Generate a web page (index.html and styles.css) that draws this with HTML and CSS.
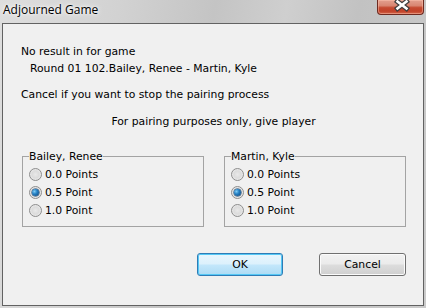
FILE: index.html
```html
<!DOCTYPE html>
<html>
<head>
<meta charset="utf-8">
<link rel="stylesheet" href="styles.css">
</head>
<body>
<div class="window">
  <div class="titlebar">
    <span class="title">Adjourned Game</span>
    <div class="close">
      <svg width="45" height="14" viewBox="0 0 45 14">
        <path d="M19.5 1.5 L28.5 8.5 M28.5 1.5 L19.5 8.5" stroke="#3d3d3d" stroke-width="5" stroke-linecap="square" fill="none"/>
        <path d="M19.5 1.5 L28.5 8.5 M28.5 1.5 L19.5 8.5" stroke="#ffffff" stroke-width="2.6" stroke-linecap="square" fill="none"/>
      </svg>
    </div>
  </div>
  <div class="client">
    <p class="line">No result in for game</p>
    <p class="line indent">Round 01 102.Bailey, Renee - Martin, Kyle</p>
    <p class="line gap-a">Cancel if you want to stop the pairing process</p>
    <p class="line gap-b center">For pairing purposes only, give player</p>
    <div class="groups">
      <fieldset class="group">
        <legend>Bailey, Renee</legend>
        <label class="option"><span class="radio"></span>0.0 Points</label>
        <label class="option"><span class="radio checked"></span>0.5 Point</label>
        <label class="option"><span class="radio"></span>1.0 Point</label>
      </fieldset>
      <fieldset class="group">
        <legend>Martin, Kyle</legend>
        <label class="option"><span class="radio"></span>0.0 Points</label>
        <label class="option"><span class="radio checked"></span>0.5 Point</label>
        <label class="option"><span class="radio"></span>1.0 Point</label>
      </fieldset>
    </div>
    <div class="buttons">
      <button class="btn btn-ok">OK</button>
      <button class="btn btn-cancel">Cancel</button>
    </div>
  </div>
</div>
</body>
</html>
```
FILE: styles.css
```css
* { box-sizing: border-box; }
html, body { margin: 0; padding: 0; }
body {
  width: 426px;
  height: 308px;
  overflow: hidden;
  background: #cfcfcf;
  font-family: "DejaVu Sans", Verdana, sans-serif;
  font-size: 10.8px;
  color: #000;
}
.window {
  width: 426px;
  height: 308px;
  display: flex;
  flex-direction: column;
  background: linear-gradient(100deg, #dedede 0%, #d2d2d2 25%, #c4c4c4 45%, #cfcfcf 60%, #c2c2c2 75%, #cbcbcb 100%);
}
.titlebar {
  height: 23px;
  flex: none;
  display: flex;
  justify-content: space-between;
  align-items: flex-start;
  padding: 0 2px 0 3px;
}
.title {
  font-family: "Open Sans", "Noto Sans", sans-serif;
  font-size: 12px;
  line-height: 16px;
  padding-top: 2px;
  color: #000;
  text-shadow: 0 0 6px #fff, 0 0 3px #fff;
}
.close {
  width: 47px;
  height: 15px;
  border: 1px solid #6e2a20;
  border-top: none;
  border-radius: 0 0 4px 4px;
  background: linear-gradient(#e3a08f 0%, #d98672 40%, #c54a31 55%, #c24229 80%, #d3684d 100%);
  box-shadow: inset 0 0 0 1px rgba(255, 200, 180, 0.45);
  display: flex;
}
.close svg { display: block; }
.client {
  flex: 1;
  margin: 0 2px 2px 2px;
  border: 1px solid #626262;
  background: #f0f0f0;
  padding: 19px 17px 0 18px;
  display: flex;
  flex-direction: column;
}
.line {
  margin: 0;
  height: 17px;
  line-height: 17px;
  white-space: nowrap;
}
.indent { padding-left: 9px; }
.gap-a { margin-top: 9px; }
.gap-b { margin-top: 10px; }
.center { text-align: center; }
.groups {
  margin-top: 20px;
  margin-left: 1px;
  display: flex;
  gap: 20px;
}
.group {
  width: 182px;
  margin: 0;
  border: 1px solid #a3a3a3;
  padding: 2px 6px 7px 6px;
  display: flex;
  flex-direction: column;
}
.group legend {
  padding: 0;
  line-height: 13px;
}
.option {
  height: 18px;
  display: flex;
  align-items: center;
  white-space: nowrap;
}
.radio {
  width: 13px;
  height: 13px;
  border-radius: 50%;
  border: 1px solid #8d8d8d;
  background: radial-gradient(circle at 50% 50%, #e9e9e9 0%, #dcdcdc 45%, #f6f6f6 100%);
  margin-right: 3px;
  flex: none;
  display: flex;
  align-items: center;
  justify-content: center;
}
.radio.checked::after {
  content: "";
  width: 7px;
  height: 7px;
  border-radius: 50%;
  background: radial-gradient(circle at 35% 35%, #7fcdf5 0%, #2580c4 40%, #0c3f72 100%);
  box-shadow: 0 0 0 0.5px #173f66;
}
.buttons {
  margin-top: 26px;
  display: flex;
  justify-content: flex-end;
  gap: 36px;
}
.btn {
  height: 23px;
  font-family: "DejaVu Sans", Verdana, sans-serif;
  font-size: 10.8px;
  color: #000;
  border-radius: 3px;
  padding: 0;
  margin: 0;
}
.btn-ok {
  width: 86px;
  border: 1px solid #2f7cb6;
  background: linear-gradient(#e8f6fd 0%, #dcf1fc 48%, #c3e7fb 52%, #addbf4 100%);
  box-shadow: inset 0 0 0 1px #55c8f5;
}
.btn-cancel {
  width: 87px;
  border: 1px solid #707070;
  background: linear-gradient(#f2f2f2 0%, #ebebeb 48%, #dddddd 52%, #cfcfcf 100%);
  box-shadow: inset 0 0 0 1px #fbfbfb;
}
```
